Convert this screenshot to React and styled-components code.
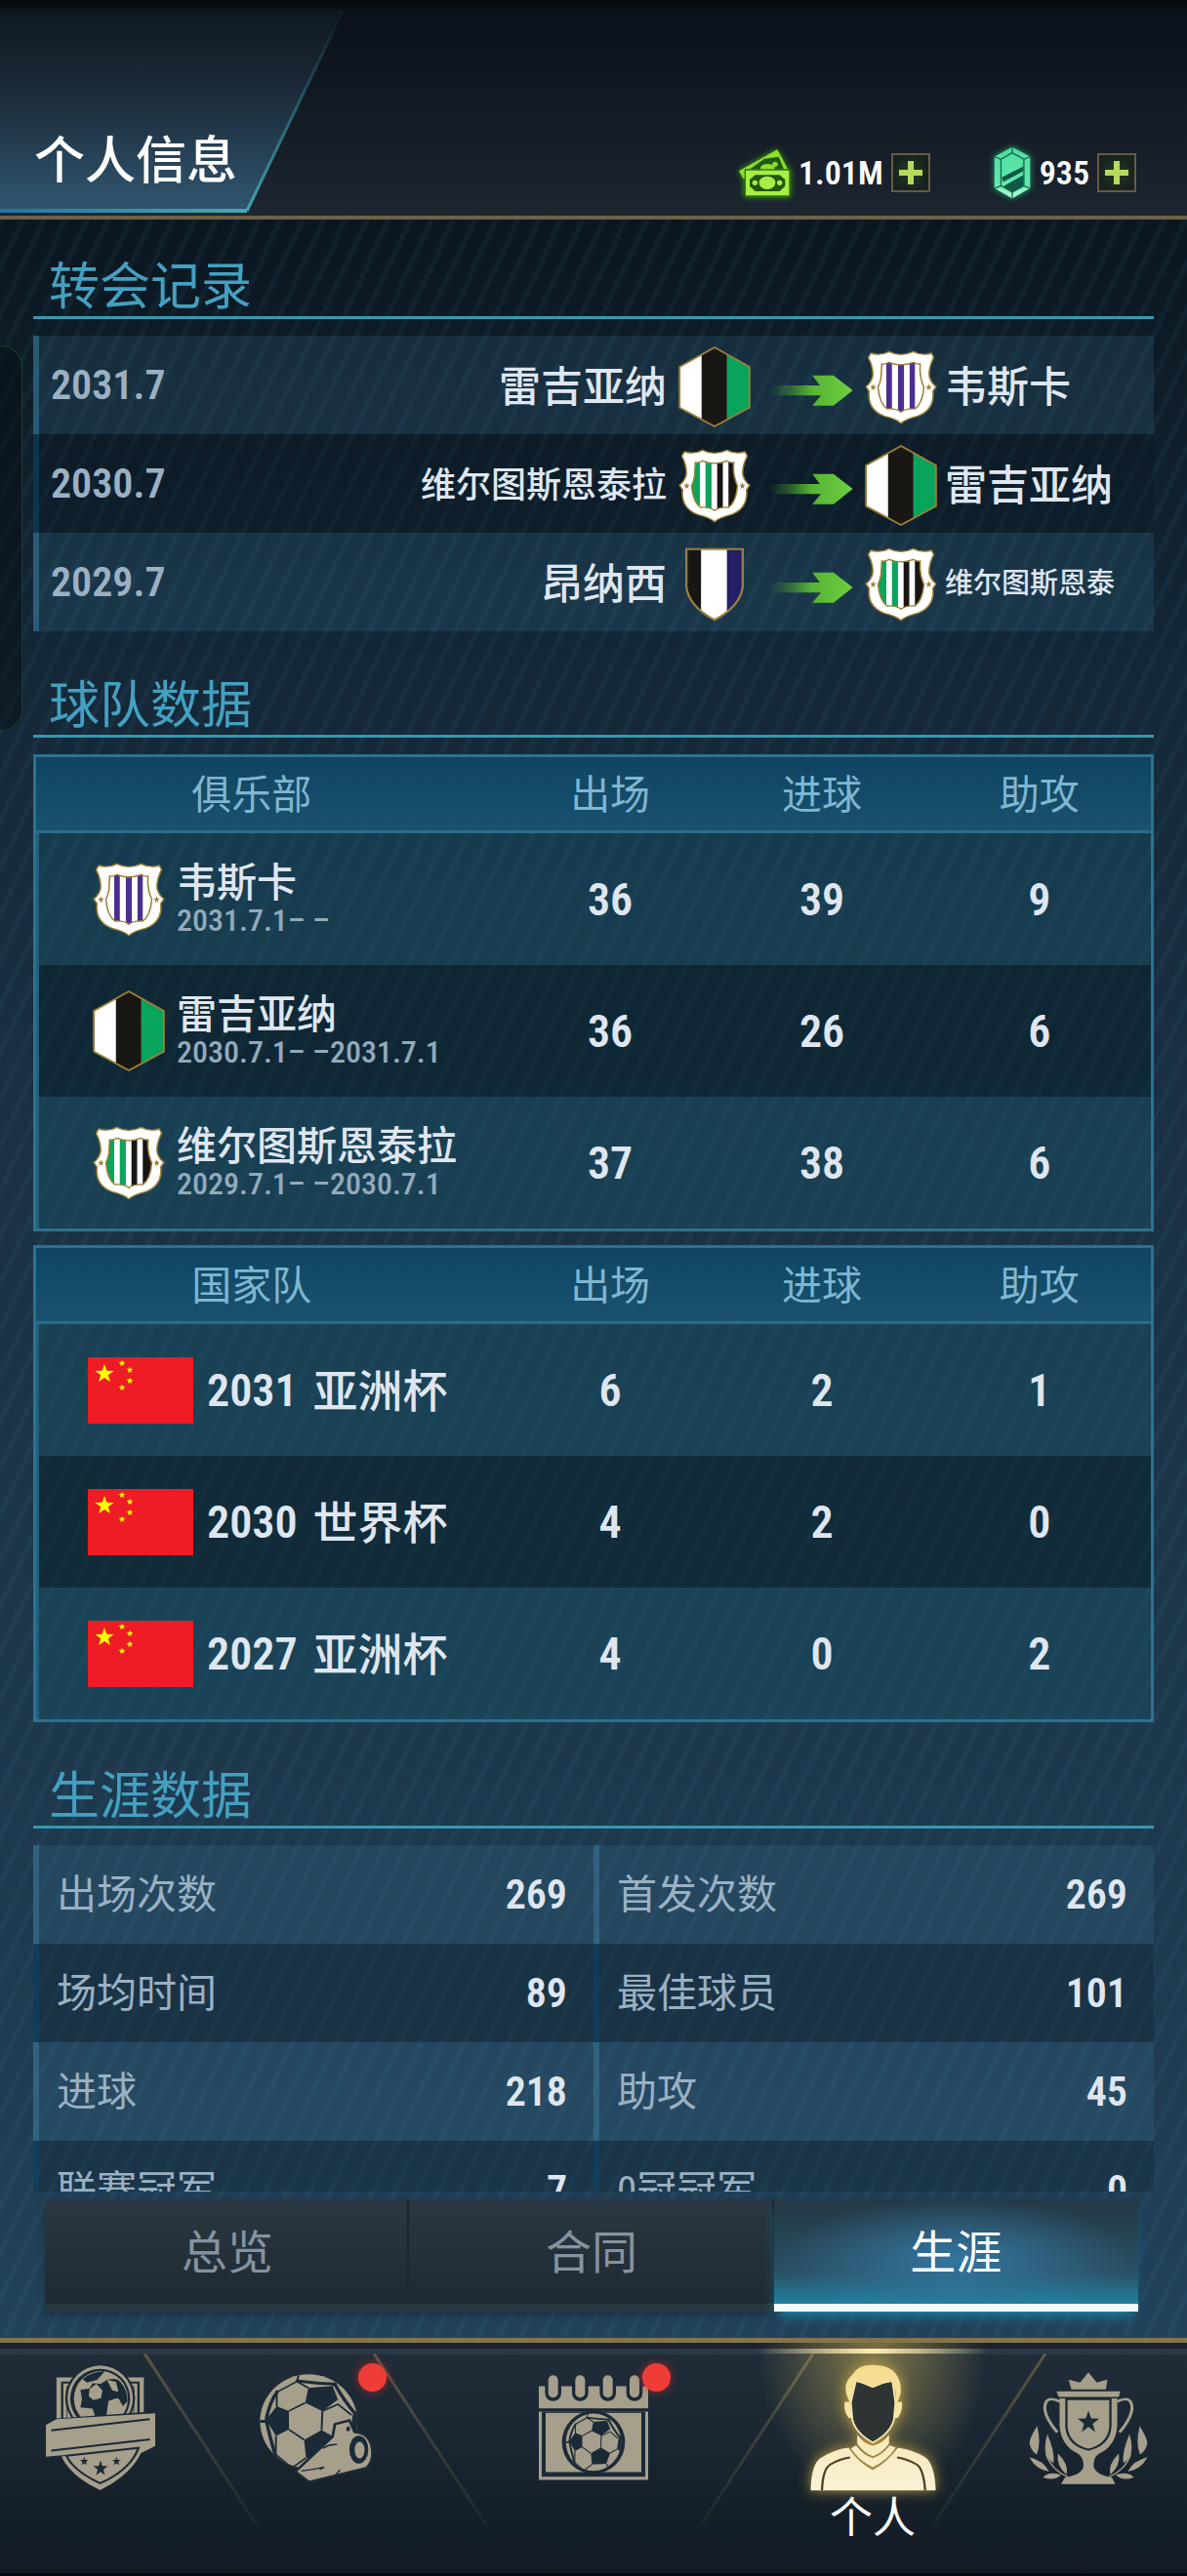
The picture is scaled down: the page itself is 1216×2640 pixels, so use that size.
import React, { useId } from 'react';
import styled, { createGlobalStyle, css } from 'styled-components';

const cjk = "'Noto Sans CJK SC', sans-serif";
const narrow = "'Roboto Condensed', 'Noto Sans CJK SC', sans-serif";
const TAN = '#a69f8c';
const INK = '#1b2a37';

const GlobalStyle = createGlobalStyle`
  * { box-sizing: border-box; }
  body { margin: 0; background: #0b1620; }
  button { font: inherit; color: inherit; border: 0; padding: 0; background: none; cursor: pointer; }
  h1, h2, dl, dd, ul { margin: 0; padding: 0; font-weight: 400; }
  svg { display: block; flex: none; }
`;

const Page = styled.div`
  position: relative;
  height: 100vh;
  display: flex;
  flex-direction: column;
  overflow: hidden;
  font-family: ${cjk};
  color: #dfe6f0;
  background:
    repeating-linear-gradient(115deg, rgba(80, 150, 180, 0) 0 12px, rgba(80, 150, 180, 0.08) 15px 17px, rgba(80, 150, 180, 0) 20px),
    linear-gradient(180deg, #0a1620 8%, #0e1d28 15%, #142838 27%, #1a3144 45%, #1d374b 66%, #1f3c51 80%, #23425a 92%);
`;

/* ---------- header ---------- */

const Header = styled.header`
  position: relative;
  height: 225px;
  flex: none;
  display: flex;
  justify-content: space-between;
  align-items: flex-end;
  padding: 0 52px 24px 35px;
  border-bottom: 4px solid #6d6248;
  background: linear-gradient(180deg, #05090d 0, #0b111a 8px, #10161f 30%, #1c2530 100%);
`;

const TitlePlate = styled.svg`
  position: absolute;
  left: 0;
  top: 0;
`;

const Title = styled.h1`
  position: relative;
  font-size: 52px;
  font-weight: 500;
  line-height: 72px;
  color: #fff;
`;

const Wallet = styled.div`
  display: flex;
  gap: 64px;
`;

const Currency = styled.div`
  display: flex;
  align-items: center;
  gap: 8px;
  height: 40px;
`;

const Amount = styled.span`
  font: 600 34px/40px ${narrow};
  color: #fff;
`;

const PlusButton = styled.button`
  width: 40px;
  height: 40px;
  border: 2px solid #665c45;
  display: grid;
  place-items: center;
  background: radial-gradient(circle, #2a3b22, #18221f 70%);
`;

/* ---------- sections ---------- */

const Scroller = styled.main`
  flex: 1;
  min-height: 0;
  overflow: hidden;
  padding: 35px 34px 0;
  display: flex;
  flex-direction: column;
  gap: 42px;
`;

const Section = styled.section`
  flex: none;
`;

const SectionTitle = styled.h2`
  font-size: 52px;
  line-height: 60px;
  padding: 0 0 4px 16px;
  margin-bottom: 17px;
  color: #44a0c0;
  border-bottom: 3px solid #3797b2;
`;

const stripe = css`
  background: rgba(62, 130, 165, 0.19);
  border-left: 6px solid rgba(52, 112, 144, 0.65);
  &:nth-child(even) {
    background: rgba(4, 14, 24, 0.2);
    border-left-color: rgba(10, 66, 100, 0.65);
  }
`;

const PlainList = styled.ul`
  list-style: none;
`;

const TransferRow = styled.li`
  ${stripe}
  height: 101px;
  padding: 4px 0 0 12px;
  display: grid;
  grid-template-columns: 1fr auto 74px 117px 74px 222px;
  align-items: center;
`;

const TransferDate = styled.time`
  font: 600 42px/52px ${narrow};
  padding-bottom: 4px;
  color: #9bb1c3;
`;

const TeamName = styled.span`
  font-size: ${(p) => p.$size}px;
  font-weight: 500;
  line-height: 56px;
  padding: 0 12px 8px 8px;
  white-space: nowrap;
`;

const CrestBox = styled.span`
  width: 74px;
  display: grid;
  justify-items: center;
`;

const ArrowBox = styled.span`
  padding: 6px 0 0 19px;
`;

const Tables = styled.div`
  display: grid;
  gap: 14px;
`;

const StatTable = styled.table`
  width: 100%;
  table-layout: fixed;
  border-spacing: 0;
  border: 3px solid #2b728e;
  th {
    height: 78px;
    padding: 0 0 6px;
    font-size: 41px;
    line-height: 56px;
    font-weight: 400;
    color: #7fb6d0;
    border-bottom: 3px solid #2a6c88;
  }
  thead tr { background: linear-gradient(180deg, rgba(14, 70, 100, 0.95), rgba(26, 86, 116, 0.9)); }
  th:first-child { padding-right: 38px; }
  td {
    height: 135px;
    padding: 0;
    text-align: center;
    font: 600 46px/56px ${narrow};
  }
  td:first-child { box-shadow: inset 3px 0 0 #23607d; }
  tbody tr { background: rgba(24, 84, 106, 0.4); }
  tbody tr:nth-child(even) { background: rgba(4, 30, 38, 0.45); }
`;

const Col = styled.col`
  width: ${(p) => p.$w}%;
`;

const ClubCell = styled.div`
  display: flex;
  align-items: center;
  gap: 12px;
  padding-left: 58px;
  text-align: left;
`;

const ClubText = styled.div`
  display: grid;
  gap: 2px;
  padding-bottom: 4px;
`;

const ClubName = styled.span`
  font: 500 41px/44px ${cjk};
  white-space: nowrap;
`;

const ClubDates = styled.span`
  font: 500 32px/36px ${narrow};
  color: #93aabb;
  white-space: nowrap;
`;

const CupCell = styled.div`
  display: flex;
  align-items: center;
  padding-left: 53px;
`;

const CupYear = styled.span`
  margin: 0 16px 0 14px;
`;

const CupName = styled.span`
  font: 500 46px/56px ${cjk};
  padding-bottom: 6px;
`;

const CareerGrid = styled.div`
  display: grid;
  grid-template-columns: 1fr 1fr;
`;

const CareerColumn = styled.dl``;

const CareerRow = styled.div`
  ${stripe}
  height: 101px;
  padding: 0 27px 0 18px;
  display: flex;
  justify-content: space-between;
  align-items: center;
  dt {
    font: 400 41px/56px ${narrow};
    color: #9ab1c3;
  }
  dd { font: 600 42px/56px ${narrow}; }
`;

const SideHandle = styled.div`
  position: absolute;
  left: 0;
  top: 354px;
  width: 23px;
  height: 395px;
  border: 1px solid #1f3a2c;
  border-left: 0;
  border-radius: 0 22px 22px 0;
  background: rgba(4, 12, 14, 0.45);
`;

/* ---------- tabs ---------- */

const Tabs = styled.div`
  flex: none;
  display: grid;
  grid-template-columns: repeat(3, 1fr);
  margin: 8px 50px 27px 46px;
  box-shadow: 0 4px 8px rgba(8, 20, 30, 0.35);
`;

const Tab = styled.button`
  height: 115px;
  font-size: 47px;
  line-height: 56px;
  padding-bottom: 6px;
  color: #8593a1;
  background: linear-gradient(180deg, #293842, #1f2a33);
  border-bottom: 8px solid #283840;
  box-shadow: inset -2px 0 0 #1b2730;
  ${(p) => p.$active && css`
    color: #fff;
    border-bottom-color: #f2fbff;
    background:
      radial-gradient(ellipse 48% 60% at 50% 58%, rgba(52, 122, 165, 0.9), rgba(52, 122, 165, 0) 100%),
      linear-gradient(180deg, #253844, #2a5064 70%, #2080a0 100%);
    box-shadow: 0 8px 12px -4px #1f8fb4;
  `}
`;

/* ---------- bottom navigation ---------- */

const Nav = styled.nav`
  position: relative;
  flex: none;
  display: grid;
  grid-template-columns: 206fr 235fr 334fr 238fr 203fr;
  border-top: 5px solid #87734c;
  border-bottom: 3px solid #06090d;
  background: linear-gradient(180deg, #1a232d 0 6px, #2b3846 6px 11px, #202c38 13px, #1b2834 35%, #162029 70%, #121a26 100%);
`;

const NavItem = styled.button`
  position: relative;
  display: flex;
  flex-direction: column;
  align-items: center;
  padding: 22px 0 34px;
  ${(p) => p.$active && css`
    background: radial-gradient(ellipse 116px 150px at 50% 6%, rgba(205, 180, 90, 0.55), rgba(205, 180, 90, 0.3) 45%, rgba(205, 180, 90, 0) 100%) no-repeat;
    &::before {
      content: '';
      position: absolute;
      top: 6px;
      left: 0;
      right: 0;
      height: 5px;
      background: linear-gradient(90deg, rgba(220, 200, 120, 0), #fff0b0 50%, rgba(220, 200, 120, 0));
    }
  `}
`;

const NavIcon = styled.span`
  position: relative;
  height: 130px;
  display: grid;
  place-items: center;
  ${(p) => p.$glow && css`filter: drop-shadow(0 0 7px rgba(215, 180, 70, 0.8));`}
`;

const NavLabel = styled.span`
  font-size: 44px;
  line-height: 48px;
  height: 50px;
  color: #fff;
`;

const Dot = styled.span`
  position: absolute;
  width: 29px;
  height: 29px;
  top: -1px;
  right: ${(p) => p.$right}px;
  border-radius: 50%;
  background: #ee3d37;
  box-shadow: 0 0 10px rgba(220, 40, 40, 0.7);
`;

const Slash = styled.svg`
  position: absolute;
  top: 11px;
  right: -59px;
  ${(p) => p.$flip && css`transform: scaleX(-1);`}
`;

/* ---------- drawings ---------- */

const star = (cx, cy, rx, ry = rx) =>
  Array.from({ length: 10 }, (_, i) => {
    const k = i % 2 ? 0.4 : 1;
    const a = -Math.PI / 2 + (i * Math.PI) / 5;
    return `${(cx + Math.cos(a) * rx * k).toFixed(1)},${(cy + Math.sin(a) * ry * k).toFixed(1)}`;
  }).join(' ');

const GOLD = '#9c7f38';

function RoyalCrest({ bands }) {
  const id = useId();
  const inner = 'M764 128 Q775 130 783 123 Q814 138 848 123 Q856 130 866 128 Q864 150 868 172 Q872 190 876 200 Q872 250 852 266 Q828 264 815 276 Q802 264 778 266 Q758 250 754 200 Q760 185 762 170 Z';
  return (
    <svg width="74" height="76" viewBox="719 86 192 228" preserveAspectRatio="none">
      <clipPath id={id}><path d={inner} /></clipPath>
      <path fill="#fff" stroke={GOLD} strokeWidth="4" d="M735 95 Q762 104 783 90 Q814 108 848 90 Q870 104 896 95 L902 108 Q888 140 890 165 Q894 185 908 198 L900 212 Q905 268 860 288 Q830 296 815 310 Q800 296 770 288 Q725 268 730 212 L722 198 Q736 185 740 165 Q742 140 728 108 Z" />
      <g clipPath={`url(#${id})`}>
        {bands.map(([x, w, c]) => <rect key={x} x={x} y="110" width={w} height="180" fill={c} />)}
      </g>
      <path d={inner} fill="none" stroke={GOLD} strokeWidth="4" />
      <polygon points={star(741, 200, 9, 11)} fill={GOLD} />
      <polygon points={star(889, 200, 9, 11)} fill={GOLD} />
    </svg>
  );
}

const violet = [[776, 15, '#4b2f90'], [807, 16, '#4b2f90'], [838, 14, '#4b2f90']];
const greenBlack = [[750, 26, '#0aa45c'], [791, 16, '#0aa45c'], [822, 15, '#181614'], [852, 28, '#181614']];

const HexCrest = () => (
  <svg width="74" height="83" viewBox="229 77 190 249" preserveAspectRatio="none">
    <path d="M324 80 L232 140 V265 L324 323 L416 265 V140 Z" fill="#fff" />
    <path d="M290 102 L324 80 L357 102 V301 L324 323 L290 301 Z" fill="#191714" />
    <path d="M357 102 L416 140 V265 L357 301 Z" fill="#08a45b" />
    <path d="M324 80 L232 140 V265 L324 323 L416 265 V140 Z" fill="none" stroke={GOLD} strokeWidth="5" />
  </svg>
);

const PlainCrest = () => (
  <svg width="60" height="76" viewBox="246 698 156 228" preserveAspectRatio="none">
    <path d="M249 703 H399 V820 Q392 880 324 921 Q256 880 249 820 Z" fill="#fff" />
    <path d="M249 703 H288 V898 Q254 865 249 820 Z" fill="#181614" />
    <path d="M357 703 H399 V820 Q394 865 357 900 Z" fill="#241f66" />
    <path d="M249 703 H399 V820 Q392 880 324 921 Q256 880 249 820 Z" fill="none" stroke={GOLD} strokeWidth="6" />
  </svg>
);

const crests = {
  huesca: () => <RoyalCrest bands={violet} />,
  virtus: () => <RoyalCrest bands={greenBlack} />,
  reggiana: HexCrest,
  plain: PlainCrest,
};

const Crest = ({ team }) => {
  const Art = crests[team];
  return <CrestBox><Art /></CrestBox>;
};

function Arrow() {
  const id = useId();
  return (
    <svg width="86" height="32" viewBox="470 160 222 96" preserveAspectRatio="none">
      <linearGradient id={id} x1="0" x2="1">
        <stop offset="0" stopColor="#3f8a2c" stopOpacity="0" />
        <stop offset="0.5" stopColor="#55b234" />
        <stop offset="1" stopColor="#6fd040" />
      </linearGradient>
      <path fill={`url(#${id})`} d="M470 193 H604 L584 162 H640 L691 208 L640 255 H584 L607 224 H470 Z" />
    </svg>
  );
}

const Flag = () => (
  <svg width="108" height="68" viewBox="0 0 108 68">
    <rect width="108" height="68" fill="#ee1c25" />
    <polygon points={star(17, 17, 10)} fill="#ff0" />
    {[[35, 6], [43, 13], [43, 24], [35, 31]].map(([x, y]) => (
      <polygon key={`${x}-${y}`} points={star(x, y, 3.6)} fill="#ff0" />
    ))}
  </svg>
);

const GlowSvg = styled.svg`
  filter: drop-shadow(0 0 3px ${(p) => p.$glow});
`;

const Cash = () => (
  <GlowSvg $glow="#3fae14" width="54" height="50" viewBox="82 82 160 150">
    <path d="M84 152 L202 86 L234 146 H104 V176 H98 Z" fill="#8ddf2a" />
    <path d="M118 146 L162 114 L206 108 L222 146 Z" fill="#1f5a12" />
    <ellipse cx="172" cy="142" rx="22" ry="12" fill="#8ddf2a" />
    <circle cx="195" cy="131" r="8" fill="#8ddf2a" />
    <rect x="103" y="148" width="137" height="81" fill="#a8ef45" stroke="#2c6a14" strokeWidth="4" />
    <path d="M134 164 H209 L226 178 V198 L209 214 H134 L117 198 V178 Z" fill="#1f5a12" />
    <ellipse cx="171" cy="188" rx="25" ry="20" fill="#a8ef45" />
    <circle cx="133" cy="188" r="8" fill="#a8ef45" />
    <circle cx="209" cy="188" r="8" fill="#a8ef45" />
  </GlowSvg>
);

const Gem = () => (
  <GlowSvg $glow="#1da86c" width="40" height="54" viewBox="836 90 120 163">
    <linearGradient id="gemFill" x1="0" x2="0" y1="0" y2="1">
      <stop offset="0" stopColor="#4fdca0" />
      <stop offset="0.7" stopColor="#62e9ae" />
      <stop offset="1" stopColor="#b8ffd9" />
    </linearGradient>
    <path d="M896 92 L951 122 V220 L896 251 L841 220 V122 Z" fill="url(#gemFill)" />
    <path d="M863 186 L931 152 V166 L868 200 Z M868 214 L931 178 V214 L896 232 Z" fill="#0d5a44" />
    <path d="M896 110 L932 130 V212 L896 232 L861 212 V130 Z M896 92 V110 M951 122 L932 130 M951 220 L932 212 M896 251 V232 M841 220 L861 212 M841 122 L861 130" fill="none" stroke="#12684c" strokeWidth="4" />
  </GlowSvg>
);

const Plus = () => (
  <svg width="24" height="24" viewBox="0 0 24 24"><path d="M9 0 H15 V9 H24 V15 H15 V24 H9 V15 H0 V9 H9 Z" fill="#b9d95c" /></svg>
);

function BallArt() {
  const id = useId();
  return (
    <g>
      <clipPath id={id}><ellipse cx="809" cy="275" rx="128" ry="145" /></clipPath>
      <g clipPath={`url(#${id})`}>
        <rect x="675" y="125" width="270" height="300" fill={TAN} />
        <g fill={INK}>
          <path d="M800 218 L808 172 L872 166 L886 208 L845 243 Z" />
          <path d="M757 243 L725 228 L697 270 L723 320 L757 300 Z" />
          <path d="M797 332 L843 302 L886 330 L868 385 L802 388 Z" />
          <path d="M925 255 L945 230 V330 L918 310 Z" />
        </g>
        <path fill="none" stroke={INK} strokeWidth="5" d="M800 218 L757 243 M757 300 L797 332 M845 243 L843 302 M845 243 L886 222 L922 256 M886 330 L918 310 M808 172 L778 152 L725 185 V230 M778 152 L784 126 M872 166 L880 156 M723 320 L722 384 M802 388 L765 418 L720 375 M868 385 L890 420" />
        <path fill="none" stroke={INK} strokeWidth="9" d="M776 150 Q830 158 878 160 Q898 205 936 258 M728 180 Q706 215 697 270 M697 270 Q706 320 722 384 M676 275 H697" />
      </g>
    </g>
  );
}

const BadgeIcon = () => (
  <svg width="112" height="128" viewBox="117 105 288 382" preserveAspectRatio="none">
    <path d="M145 142 H375 V275 L145 290 Z" fill={TAN} />
    <path d="M160 285 V158 H361 V275" fill="none" stroke={INK} strokeWidth="6" />
    <path d="M172 285 V170 H349 V275" fill="none" stroke={INK} strokeWidth="2" />
    <ellipse cx="260" cy="206" rx="92" ry="104" fill={INK} />
    <ellipse cx="260" cy="206" rx="86" ry="100" fill={TAN} />
    <ellipse cx="260" cy="207" rx="79" ry="91" fill={INK} />
    <ellipse cx="262" cy="207" rx="71" ry="84" fill={TAN} />
    <path fill={INK} d="M214 148 Q238 124 272 124 L252 150 L226 158 Z M278 150 Q305 140 316 160 Q332 180 332 215 L320 230 L308 206 L282 214 L276 262 L250 272 L240 238 L208 234 L212 208 L208 180 L232 176 L240 160 L262 162 Z" />
    <path fill={TAN} d="M232 178 L250 162 L266 182 L262 206 L242 212 L230 200 Z M278 150 L302 156 L308 186 L292 182 Z M286 214 L302 206 L308 232 L326 238 L318 262 L278 262 Z" />
    <path d="M105 290 L145 268 L405 246 V358 L368 376 L160 390 L117 394 Z" fill={INK} />
    <path d="M117 288 L145 270 L405 252 V352 L370 372 L160 380 L117 385 Z" fill={TAN} />
    <path d="M131 304 L391 270 M131 366 L391 332" stroke={INK} strokeWidth="6" />
    <path d="M158 384 L374 356 Q350 435 260 487 Q182 445 158 384 Z" fill={TAN} />
    <path d="M171 382 L361 358 Q340 425 260 466 Q192 430 171 382 Z" fill="none" stroke={INK} strokeWidth="6" />
    <polygon points={star(218, 399, 12, 14)} fill={INK} />
    <polygon points={star(303, 399, 12, 14)} fill={INK} />
    <polygon points={star(261, 421, 20, 25)} fill={INK} />
  </svg>
);

const MatchIcon = () => (
  <svg width="116" height="111" viewBox="680 129 298 334" preserveAspectRatio="none">
    <BallArt />
    <path fill={TAN} stroke={INK} strokeWidth="7" d="M774 430 L872 322 L878 284 L916 272 L930 308 Q974 310 977 370 Q977 402 962 418 L810 462 Z" />
    <path fill="none" stroke={INK} strokeWidth="4" d="M846 358 Q865 344 884 347 M790 428 Q820 424 850 416 L838 424 M880 440 L892 424" />
    <ellipse cx="913" cy="298" rx="5" ry="8" fill={INK} />
    <ellipse cx="941" cy="362" rx="25" ry="43" fill={INK} />
    <ellipse cx="943" cy="363" rx="13" ry="26" fill={TAN} />
  </svg>
);

const CalendarIcon = () => (
  <svg width="112" height="108" viewBox="36 46 336 323">
    <rect x="36" y="80" width="336" height="68" fill={TAN} />
    {[80, 163, 248, 330].map((x) => (
      <g key={x}>
        <rect x={x - 25} y="52" width="50" height="74" rx="25" fill={INK} />
        <rect x={x - 15} y="46" width="30" height="69" rx="15" fill={TAN} />
      </g>
    ))}
    <path d="M36 158 H372 V368 H36 Z" fill={TAN} />
    <path d="M45 158 H363 V358 H45 Z" fill={INK} />
    <rect x="57" y="162" width="294" height="182" fill={TAN} />
    <circle cx="204" cy="252" r="97" fill={INK} />
    <svg x="119" y="164" width="170" height="176" viewBox="681 130 256 290" preserveAspectRatio="none"><BallArt /></svg>
  </svg>
);

const PersonIcon = () => (
  <svg width="129" height="130" viewBox="577 98 332 392" preserveAspectRatio="none">
    <linearGradient id="personFill" x1="0" x2="0" y1="98" y2="490" gradientUnits="userSpaceOnUse">
      <stop offset="0" stopColor="#f5dc8c" />
      <stop offset="1" stopColor="#faf2d8" />
    </linearGradient>
    <g fill="url(#personFill)">
      <path d="M684 216 L688 268 Q696 310 742 340 Q790 310 798 268 L802 216 L794 150 L742 160 L697 150 Z" fill="#2d3433" stroke="#f8e7b0" strokeWidth="5" />
      <path d="M682 216 Q668 190 671 162 Q676 142 690 128 Q702 100 742 100 Q790 100 805 132 Q816 150 816 178 Q816 200 804 218 L802 180 Q792 168 792 150 Q766 158 742 171 Q716 158 696 150 Q697 170 688 182 Z" />
      <path d="M668 214 Q664 240 678 264 L687 264 L681 214 Z M819 214 Q822 240 808 264 L799 264 L804 214 Z" />
      <path d="M701 316 Q720 345 742 350 Q765 345 785 316 V344 Q765 374 742 382 Q720 374 701 344 Z" />
      <path d="M684 358 L698 348 Q718 380 742 388 Q768 378 787 348 L803 356 Q780 395 742 416 Q705 395 684 358 Z" />
      <path d="M578 488 Q580 402 607 386 Q640 362 678 356 Q703 402 742 425 Q782 400 808 356 Q850 364 880 385 Q905 405 908 488 Z" />
    </g>
    <path fill="none" stroke="#4a4128" strokeWidth="6" d="M608 488 Q610 422 630 408 Q655 390 682 386 M880 488 Q876 422 858 408 Q832 390 806 386" />
  </svg>
);

const Laurel = () => (
  <g fill={TAN}>
    <path d="M1173 290 Q1148 335 1154 350 Q1160 370 1172 378 Q1184 345 1173 290 Z" />
    <path d="M1200 316 Q1190 350 1196 375 Q1204 398 1216 404 Q1220 370 1200 316 Z" />
    <path d="M1152 386 Q1170 425 1204 430 Q1190 396 1152 386 Z" />
    <path d="M1228 375 Q1222 410 1250 440 Q1258 410 1228 375 Z" />
    <path d="M1188 448 Q1205 428 1236 440 Q1220 460 1188 448 Z" />
    <path d="M1196 375 Q1210 425 1254 446" fill="none" stroke={TAN} strokeWidth="4" />
  </g>
);

const TrophyIcon = () => (
  <svg width="122" height="115" viewBox="1151 125 314 344" preserveAspectRatio="none">
    <g fill={TAN}>
      <path d="M1256 148 L1286 157 L1308 126 L1330 157 L1358 148 L1354 178 H1263 Z" />
      <path d="M1224 184 H1392 L1388 201 H1230 Z" />
      <path d="M1232 206 H1384 V290 Q1380 350 1338 374 Q1320 385 1322 415 Q1328 440 1370 448 L1379 468 H1236 L1246 448 Q1290 440 1295 415 Q1296 385 1279 374 Q1236 350 1232 290 Z" />
    </g>
    <path d="M1250 208 V292 Q1254 348 1308 363 Q1362 348 1366 292 V208 Z" fill="none" stroke={INK} strokeWidth="6" />
    <polygon points={star(1308, 279, 30, 36)} fill={INK} />
    <path fill="none" stroke={TAN} strokeWidth="8" d="M1234 216 Q1196 194 1193 232 Q1192 262 1226 310 M1382 216 Q1420 194 1423 232 Q1424 262 1390 310" />
    <Laurel />
    <g transform="translate(2616 0) scale(-1 1)"><Laurel /></g>
  </svg>
);

const NavSlash = ({ flip }) => {
  const id = useId();
  return (
    <Slash $flip={flip} width="118" height="177" viewBox="0 0 118 177">
      <linearGradient id={id} x1="0" x2="0" y1="0" y2="177" gradientUnits="userSpaceOnUse">
        <stop offset="0" stopColor="#5d5844" />
        <stop offset="1" stopColor="#4b4a3e" stopOpacity="0.15" />
      </linearGradient>
      <path d="M1 0 L117 177" stroke={`url(#${id})`} strokeWidth="3" />
    </Slash>
  );
};

/* ---------- data ---------- */

const transfers = [
  { date: '2031.7', from: ['雷吉亚纳', 'reggiana', 43], to: ['韦斯卡', 'huesca', 43] },
  { date: '2030.7', from: ['维尔图斯恩泰拉', 'virtus', 36], to: ['雷吉亚纳', 'reggiana', 43] },
  { date: '2029.7', from: ['昂纳西', 'plain', 43], to: ['维尔图斯恩泰', 'virtus', 29] },
];

const clubs = [
  ['huesca', '韦斯卡', '2031.7.1– –', 36, 39, 9],
  ['reggiana', '雷吉亚纳', '2030.7.1– –2031.7.1', 36, 26, 6],
  ['virtus', '维尔图斯恩泰拉', '2029.7.1– –2030.7.1', 37, 38, 6],
];

const cups = [
  ['2031', '亚洲杯', 6, 2, 1],
  ['2030', '世界杯', 4, 2, 0],
  ['2027', '亚洲杯', 4, 0, 2],
];

const career = [
  [['出场次数', 269], ['场均时间', 89], ['进球', 218], ['联赛冠军', 7]],
  [['首发次数', 269], ['最佳球员', 101], ['助攻', 45], ['0冠冠军', 0]],
];

const navItems = [
  { name: '俱乐部', Icon: BadgeIcon },
  { name: '比赛', Icon: MatchIcon, dot: -14 },
  { name: '赛程', Icon: CalendarIcon, dot: -23 },
  { name: '个人', Icon: PersonIcon, active: true },
  { name: '荣誉', Icon: TrophyIcon },
];

const TableHead = ({ first }) => (
  <>
    <colgroup><Col $w={42} /><Col $w={19} /><Col $w={19} /><Col $w={20} /></colgroup>
    <thead>
      <tr>{[first, '出场', '进球', '助攻'].map((t) => <th key={t} scope="col">{t}</th>)}</tr>
    </thead>
  </>
);

export default function App() {
  return (
    <Page>
      <GlobalStyle />
      <Header>
        <TitlePlate width="360" height="221" viewBox="0 0 360 221" aria-hidden="true">
          <linearGradient id="plate" x1="0" x2="0" y1="0" y2="1">
            <stop offset="0" stopColor="#0f1820" />
            <stop offset="0.4" stopColor="#1b2a38" />
            <stop offset="1" stopColor="#31566f" />
          </linearGradient>
          <linearGradient id="plateEdge" x1="0" x2="0" y1="0" y2="1">
            <stop offset="0" stopColor="#2c7f90" stopOpacity="0" />
            <stop offset="1" stopColor="#3fa3b2" />
          </linearGradient>
          <linearGradient id="plateBase" x1="0" x2="1">
            <stop offset="0" stopColor="#2076a0" />
            <stop offset="1" stopColor="#47a9b4" />
          </linearGradient>
          <path d="M0 10 H352 L253 216 H0 Z" fill="url(#plate)" />
          <path d="M352 10 L253 216" stroke="url(#plateEdge)" strokeWidth="3" />
          <rect y="214" width="253" height="4" fill="url(#plateBase)" />
        </TitlePlate>
        <Title>个人信息</Title>
        <Wallet>
          <Currency><Cash /><Amount>1.01M</Amount><PlusButton aria-label="+"><Plus /></PlusButton></Currency>
          <Currency><Gem /><Amount>935</Amount><PlusButton aria-label="+"><Plus /></PlusButton></Currency>
        </Wallet>
      </Header>

      <Scroller>
        <Section>
          <SectionTitle>转会记录</SectionTitle>
          <PlainList>
            {transfers.map(({ date, from, to }) => (
              <TransferRow key={date}>
                <TransferDate>{date}</TransferDate>
                <TeamName $size={from[2]}>{from[0]}</TeamName>
                <Crest team={from[1]} />
                <ArrowBox><Arrow /></ArrowBox>
                <Crest team={to[1]} />
                <TeamName $size={to[2]}>{to[0]}</TeamName>
              </TransferRow>
            ))}
          </PlainList>
        </Section>

        <Section>
          <SectionTitle>球队数据</SectionTitle>
          <Tables>
            <StatTable>
              <TableHead first="俱乐部" />
              <tbody>
                {clubs.map(([team, name, dates, ...values]) => (
                  <tr key={team}>
                    <td>
                      <ClubCell>
                        <Crest team={team} />
                        <ClubText><ClubName>{name}</ClubName><ClubDates>{dates}</ClubDates></ClubText>
                      </ClubCell>
                    </td>
                    {values.map((v, i) => <td key={i}>{v}</td>)}
                  </tr>
                ))}
              </tbody>
            </StatTable>
            <StatTable>
              <TableHead first="国家队" />
              <tbody>
                {cups.map(([year, cup, ...values]) => (
                  <tr key={year}>
                    <td><CupCell><Flag /><CupYear>{year}</CupYear><CupName>{cup}</CupName></CupCell></td>
                    {values.map((v, i) => <td key={i}>{v}</td>)}
                  </tr>
                ))}
              </tbody>
            </StatTable>
          </Tables>
        </Section>

        <Section>
          <SectionTitle>生涯数据</SectionTitle>
          <CareerGrid>
            {career.map((column, i) => (
              <CareerColumn key={i}>
                {column.map(([label, value]) => (
                  <CareerRow key={label}><dt>{label}</dt><dd>{value}</dd></CareerRow>
                ))}
              </CareerColumn>
            ))}
          </CareerGrid>
        </Section>
      </Scroller>
      <SideHandle />

      <Tabs role="tablist">
        {['总览', '合同', '生涯'].map((t) => (
          <Tab key={t} role="tab" aria-selected={t === '生涯'} $active={t === '生涯'}>{t}</Tab>
        ))}
      </Tabs>

      <Nav>
        {navItems.map(({ name, Icon, dot, active }, i) => (
          <NavItem key={name} aria-label={name} $active={active}>
            {i < 4 && <NavSlash flip={i > 1} />}
            <NavIcon $glow={active}>
              <Icon />
              {dot !== undefined && <Dot $right={dot} />}
            </NavIcon>
            <NavLabel>{active ? name : ''}</NavLabel>
          </NavItem>
        ))}
      </Nav>
    </Page>
  );
}
